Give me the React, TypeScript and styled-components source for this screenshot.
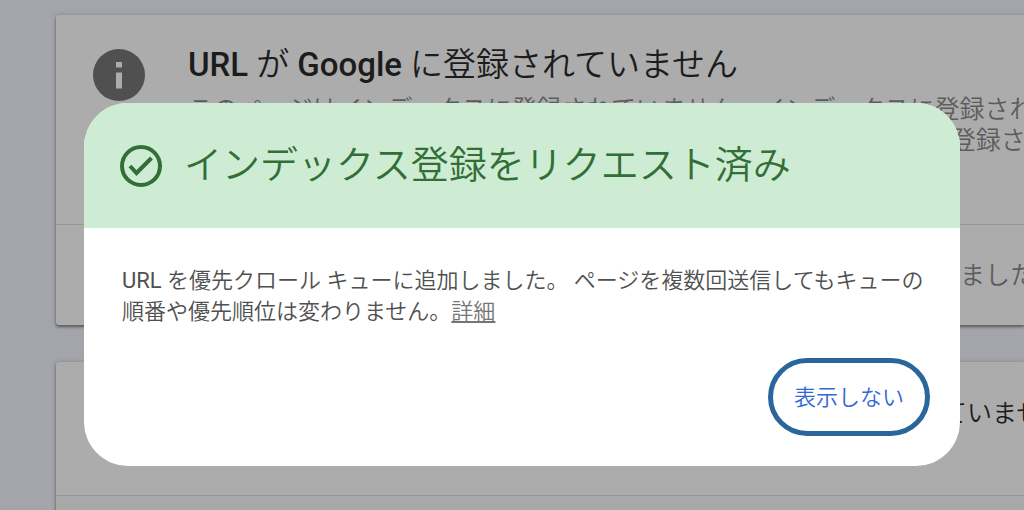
import React from "react";
import styled, { createGlobalStyle } from "styled-components";

const GlobalStyle = createGlobalStyle`
  * { box-sizing: border-box; }
  body {
    margin: 0;
    background: #a3a5aa;
    font-family: Roboto, "Noto Sans CJK JP", sans-serif;
    font-weight: 350;
  }
  h1, h2, p { margin: 0; font-weight: 350; }
`;

const Page = styled.main`
  display: flex;
  flex-direction: column;
  gap: 37px;
  height: 100vh;
  padding: 15px 0 0 56px;
  overflow: hidden;
`;

const Card = styled.section`
  flex: none;
  background: #acacac;
  border-radius: 3px 0 0 3px;
  box-shadow: 0 2px 3px rgba(0, 0, 0, 0.4), 0 0 5px rgba(0, 0, 0, 0.16);
  white-space: nowrap;
  overflow: hidden;
`;

const Summary = styled.div`
  display: flex;
  gap: 43px;
  height: 209px;
  padding: 28px 0 0 37px;
`;

const InfoIcon = styled.svg`
  flex: none;
  width: 52px;
  height: 52px;
  margin-top: 6px;
`;

const Heading = styled.h1`
  font-size: 33px;
  line-height: 44px;
  color: #1c1c1c;

  b { font-weight: 500; }
`;

const Description = styled.p`
  margin-top: 7px;
  font-size: 25px;
  line-height: 31px;
  color: #5c5c5c;
`;

const CardRow = styled.div<{ $tall?: boolean }>`
  display: flex;
  align-items: center;
  height: ${(p) => (p.$tall ? "133px" : "101px")};
  padding: ${(p) => (p.$tall ? "0 0 36px 125px" : "0 0 4px 125px")};
  font-size: 25px;
  color: ${(p) => (p.$tall ? "#1c1c1c" : "#5c5c5c")};

  ${Summary} + & { border-top: 1px solid #969696; }
`;

const CardFooter = styled.div`
  height: 60px;
  background: #a8a8a8;
  border-top: 1px solid #969696;
`;

const Overlay = styled.div`
  position: fixed;
  inset: 0;
  padding: 103px 64px 44px 84px;
`;

const Dialog = styled.div`
  overflow: hidden;
  background: #fff;
  border-radius: 44px;
`;

const DialogHeader = styled.header`
  display: flex;
  align-items: center;
  gap: 22px;
  height: 125px;
  padding: 0 36px;
  background: #ceecd3;
  color: #326f36;
`;

const CheckIcon = styled.svg`
  flex: none;
  width: 42px;
  height: 42px;
`;

const DialogTitle = styled.h2`
  padding-bottom: 2px;
  font-size: 38px;
  line-height: 48px;
  white-space: nowrap;
`;

const DialogText = styled.p`
  padding: 37px 30px 0 38px;
  font-size: 22px;
  line-height: 31px;
  color: #505050;
`;

const Latin = styled.span`
  font-weight: 400;
`;

const DetailsLink = styled.a`
  color: #757575;
  text-decoration: underline;
`;

const Actions = styled.div`
  display: flex;
  justify-content: flex-end;
  padding: 31px 30px 30px;
`;

const DismissButton = styled.button`
  height: 78px;
  padding: 0 21px 4px;
  border: 5px solid #2a659c;
  border-radius: 39px;
  background: #fff;
  color: #3367d6;
  font-family: inherit;
  font-size: 22px;
  font-weight: 350;
`;

export default function App() {
  return (
    <>
      <GlobalStyle />
      <Page>
        <Card>
          <Summary>
            <InfoIcon viewBox="0 0 52 52" aria-hidden="true">
              <circle cx="26" cy="26" r="26" fill="#505050" />
              <path d="M23 13h6v5.500h-6zM23 23.500h6v16h-6z" fill="#acacac" />
            </InfoIcon>
            <div>
              <Heading>
                <b>URL</b> が <b>Google</b> に登録されていません
              </Heading>
              <Description>
                このページはインデックスに登録されていません。インデックスに登録されていない
                <br />
                該当ページは、 Google 検索結果に表示されません。インデックスに登録されない
              </Description>
            </div>
          </Summary>
          <CardRow>
            <span>ページを変更しましたか？ インデックス登録を再度リクエストしてみました</span>
          </CardRow>
        </Card>
        <Card>
          <CardRow $tall>
            <span>検査した URL: このページは現在もまだインデックスへの登録がされていません</span>
          </CardRow>
          <CardFooter />
        </Card>
      </Page>
      <Overlay>
        <Dialog role="dialog" aria-modal="true" aria-labelledby="dialog-title">
          <DialogHeader>
            <CheckIcon viewBox="0 0 42 42" fill="none" stroke="currentColor" strokeWidth="4" aria-hidden="true">
              <circle cx="21" cy="21" r="19" />
              <path d="M10 21l6.500 7L31.500 13" />
            </CheckIcon>
            <DialogTitle id="dialog-title">インデックス登録をリクエスト済み</DialogTitle>
          </DialogHeader>
          <DialogText>
            <Latin>URL</Latin> を優先クロール キューに追加しました。 ページを複数回送信してもキューの順番や優先順位は変わりません。
            <DetailsLink href="#details">詳細</DetailsLink>
          </DialogText>
          <Actions>
            <DismissButton type="button">表示しない</DismissButton>
          </Actions>
        </Dialog>
      </Overlay>
    </>
  );
}
